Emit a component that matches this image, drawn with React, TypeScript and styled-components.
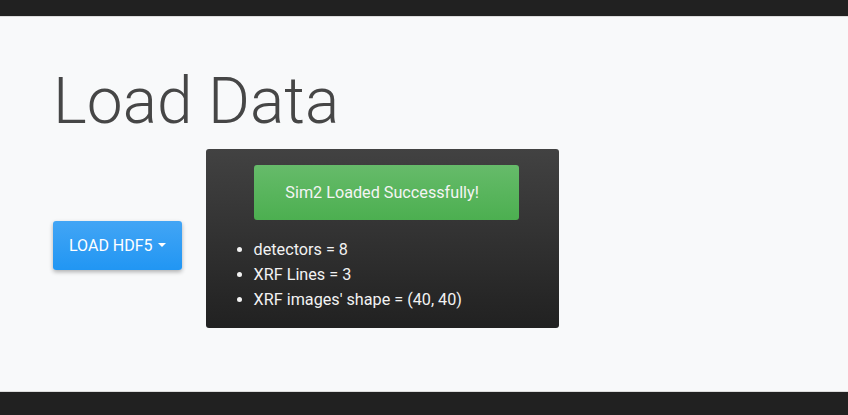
import React from "react";
import styled, { createGlobalStyle } from "styled-components";

const GlobalStyle = createGlobalStyle`
  html, body {
    margin: 0;
    padding: 0;
    height: 100%;
  }
  body {
    background: #f8f9fa;
    font-family: Roboto, "Liberation Sans", sans-serif;
  }
  #root {
    height: 100%;
  }
`;

const Page = styled.div`
  display: flex;
  flex-direction: column;
  height: 415px;
  overflow: hidden;
`;

const TopBar = styled.div`
  height: 16px;
  background: #212121;
  border-bottom: 1px solid #dcdcdc;
  flex-shrink: 0;
`;

const Main = styled.main`
  flex: 1;
  padding: 47px 53px 0 53px;
  background: #f8f9fa;
`;

const Footer = styled.footer`
  height: 23px;
  background: #212121;
  border-top: 1px solid #dcdcdc;
  flex-shrink: 0;
`;

const Title = styled.h1`
  margin: 0 0 8px 0;
  font-size: 64px;
  font-weight: 300;
  line-height: 1.2;
  color: #464646;
`;

const Row = styled.div`
  display: flex;
  align-items: flex-start;
  gap: 24px;
`;

const LoadButton = styled.button`
  margin-top: 72px;
  display: flex;
  align-items: center;
  gap: 5px;
  height: 49px;
  padding: 0 16px;
  border: none;
  border-radius: 3px;
  background: linear-gradient(to bottom, #42a5f5, #2196f3);
  box-shadow: 0 2px 4px rgba(0, 0, 0, 0.3);
  color: #fff;
  font-family: Roboto, "Liberation Sans", sans-serif;
  font-size: 16px;
  text-transform: uppercase;
  cursor: pointer;
`;

const Caret = styled.span`
  width: 0;
  height: 0;
  border-left: 4px solid transparent;
  border-right: 4px solid transparent;
  border-top: 4px solid #fff;
`;

const Card = styled.div`
  width: 353px;
  box-sizing: border-box;
  padding: 16px 40px 16px 48px;
  border-radius: 3px;
  background: linear-gradient(to bottom, #424242, #212121);
  color: #f2f2f2;
`;

const Alert = styled.div`
  height: 55px;
  display: flex;
  align-items: center;
  justify-content: center;
  padding: 1px 8px 0 0;
  box-sizing: border-box;
  border-radius: 3px;
  background: linear-gradient(to bottom, #66bb6a, #4caf50);
  color: #f4f4f4;
  font-size: 16.2px;
`;

const InfoList = styled.ul`
  margin: 17px 0 0 0;
  padding: 0;
  list-style: disc outside;
  font-size: 16.2px;
  line-height: 25px;
`;

const info = ["detectors = 8", "XRF Lines = 3", "XRF images' shape = (40, 40)"];

export default function App() {
  return (
    <>
      <GlobalStyle />
      <Page>
        <TopBar />
        <Main>
          <Title>Load Data</Title>
          <Row>
            <LoadButton>
              Load HDF5
              <Caret />
            </LoadButton>
            <Card>
              <Alert>Sim2 Loaded Successfully!</Alert>
              <InfoList>
                {info.map((line) => (
                  <li key={line}>{line}</li>
                ))}
              </InfoList>
            </Card>
          </Row>
        </Main>
        <Footer />
      </Page>
    </>
  );
}
